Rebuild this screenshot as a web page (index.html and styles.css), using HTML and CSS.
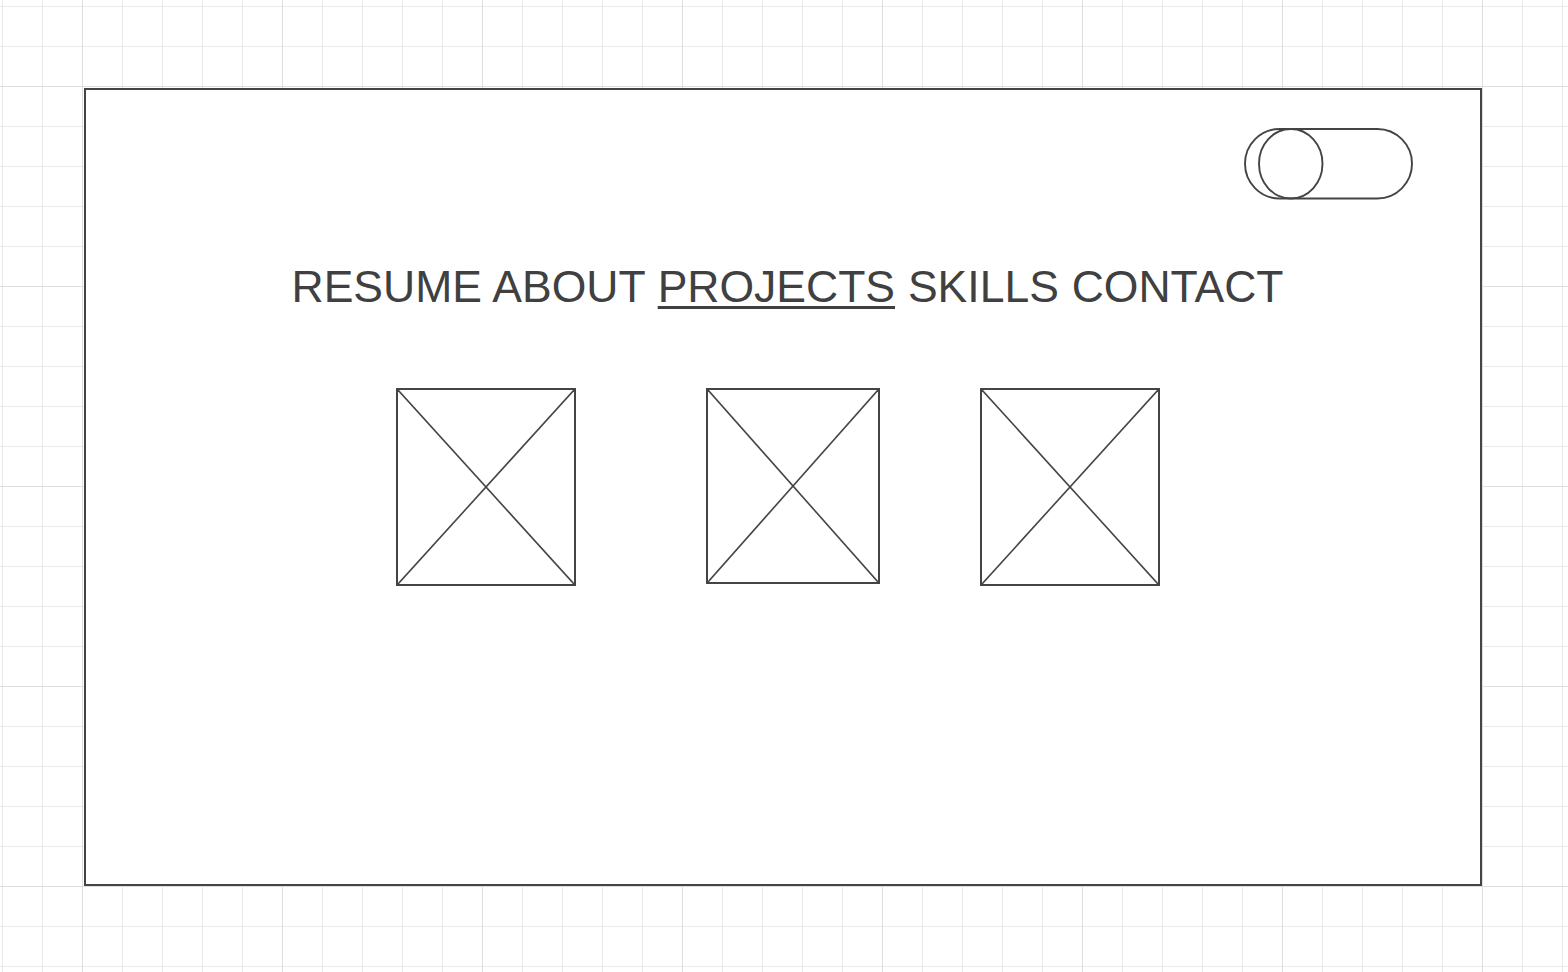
FILE: index.html
```html
<!DOCTYPE html>
<html lang="en">
<head>
<meta charset="utf-8">
<title>Projects wireframe</title>
<link rel="stylesheet" href="styles.css">
</head>
<body>
<main class="frame">
  <header class="top">
    <svg class="toggle" width="172" height="74" viewBox="0 0 172 74" aria-label="toggle">
      <rect x="2" y="2" width="167" height="69.5" rx="34.75" ry="34.75" fill="none" stroke="#444" stroke-width="1.9"/>
      <ellipse cx="47.75" cy="36.75" rx="31.75" ry="34.75" fill="none" stroke="#444" stroke-width="1.9"/>
    </svg>
  </header>
  <nav class="nav">
    <span>RESUME</span> <span>ABOUT</span> <span class="active">PROJECTS</span> <span>SKILLS</span> <span>CONTACT</span>
  </nav>
  <section class="gallery">
    <div class="ph ph-a">
      <svg width="100%" height="100%"><line x1="0" y1="0" x2="100%" y2="100%"/><line x1="100%" y1="0" x2="0" y2="100%"/></svg>
    </div>
    <div class="ph ph-b">
      <svg width="100%" height="100%"><line x1="0" y1="0" x2="100%" y2="100%"/><line x1="100%" y1="0" x2="0" y2="100%"/></svg>
    </div>
    <div class="ph ph-c">
      <svg width="100%" height="100%"><line x1="0" y1="0" x2="100%" y2="100%"/><line x1="100%" y1="0" x2="0" y2="100%"/></svg>
    </div>
  </section>
</main>
</body>
</html>
```

FILE: styles.css
```css
html, body {
  margin: 0;
  padding: 0;
}
body {
  width: 1568px;
  height: 972px;
  overflow: hidden;
  background-color: #ffffff;
  background-image:
    linear-gradient(to right, #dedede 1px, transparent 1px),
    linear-gradient(to bottom, #dedede 1px, transparent 1px),
    linear-gradient(to right, #eaeaea 1px, transparent 1px),
    linear-gradient(to bottom, #eaeaea 1px, transparent 1px);
  background-size: 200px 200px, 200px 200px, 40px 40px, 40px 40px;
  background-position: 82px 0, 0 86px, 2px 0, 0 6px;
  font-family: "Liberation Sans", Arial, sans-serif;
  color: #404040;
  padding-top: 88px;
  box-sizing: border-box;
}
.frame {
  margin-left: 84px;
  width: 1398px;
  height: 798px;
  box-sizing: border-box;
  border: 2px solid #444444;
  background: #ffffff;
}
.top {
  display: flex;
  justify-content: flex-end;
  padding-top: 37px;
  padding-right: 65px;
}
.toggle {
  display: block;
}
.nav {
  margin-top: 64px;
  text-align: center;
  font-size: 44.5px;
  line-height: 1;
  padding-left: 9px;
  word-spacing: 0.5px;
  white-space: nowrap;
}
.nav .active {
  text-decoration: underline;
  text-decoration-thickness: 3px;
  text-underline-offset: 4px;
}
.gallery {
  display: flex;
  align-items: flex-start;
  margin-top: 78px;
  padding-left: 310px;
}
.ph {
  box-sizing: border-box;
  border: 2px solid #444444;
  width: 180px;
  height: 198px;
}
.ph svg {
  display: block;
}
.ph line {
  stroke: #444444;
  stroke-width: 1.6;
}
.ph-b {
  width: 174px;
  height: 196px;
  margin-left: 130px;
}
.ph-c {
  margin-left: 100px;
}
```
